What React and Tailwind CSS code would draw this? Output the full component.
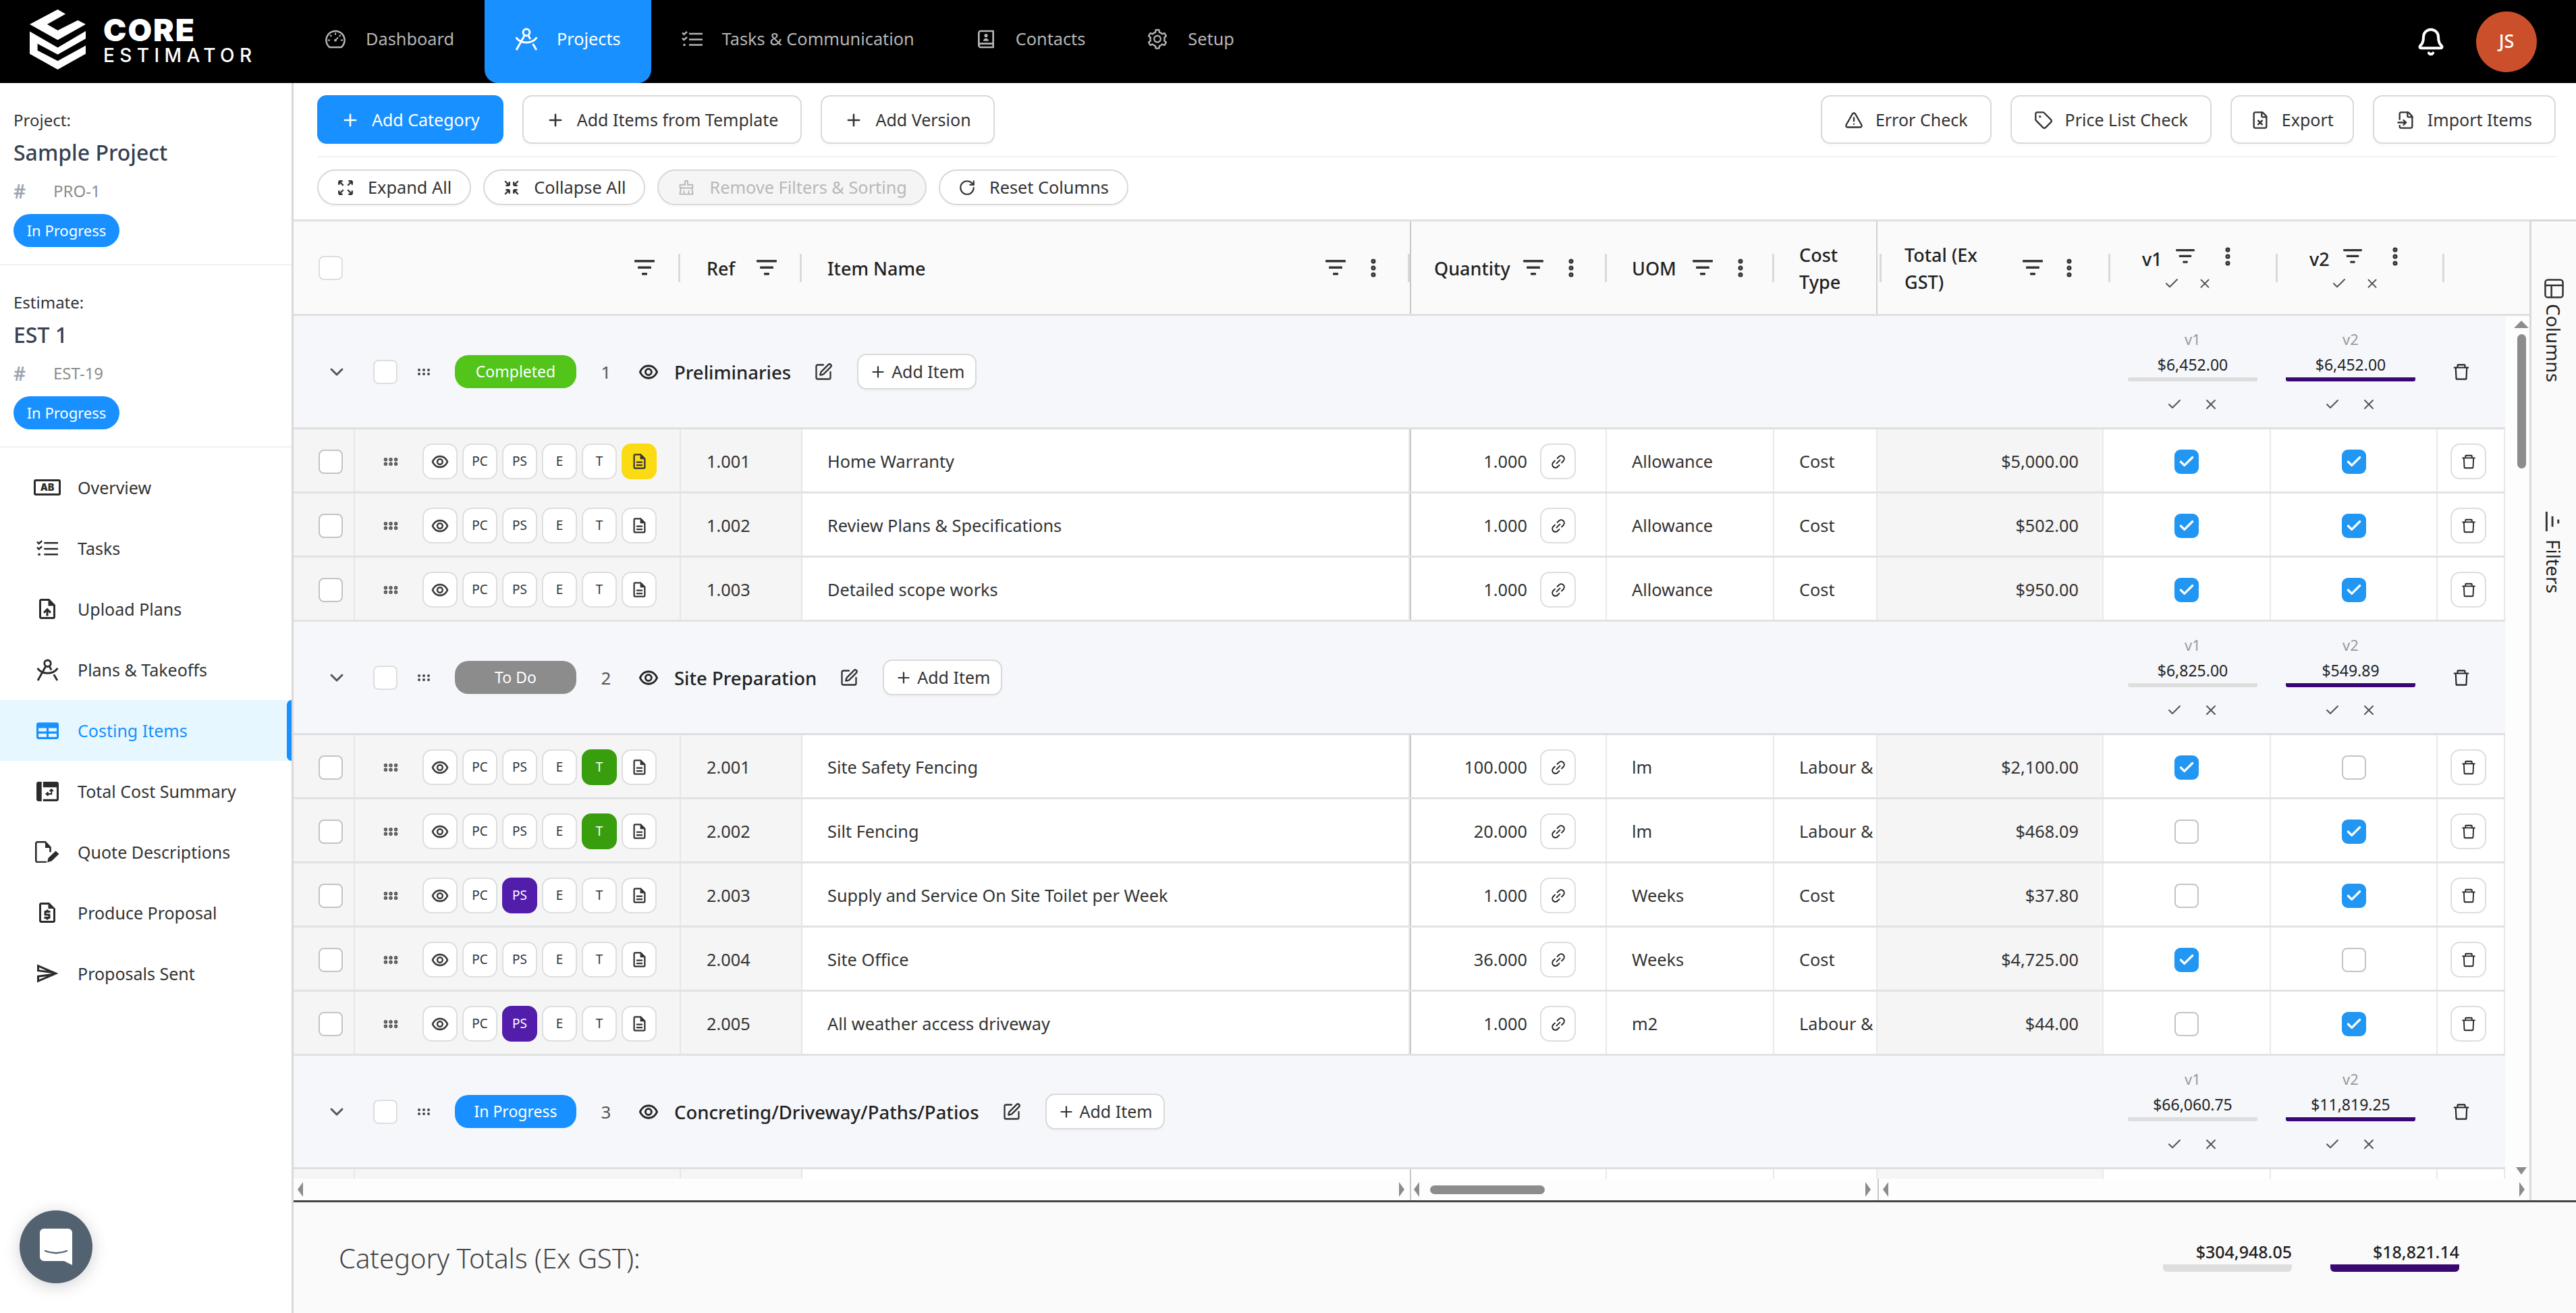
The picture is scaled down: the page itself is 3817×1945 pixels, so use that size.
import React from 'react';
import { Check, ChevronDown, EllipsisVertical, GripHorizontal, Plus, RotateCw, SquarePen, TriangleAlert, Tag, FileX, FileInput, X, Bell } from 'lucide-react';
import { AiOutlineClear, AiOutlineDashboard, AiOutlineDelete, AiOutlineEye, AiOutlineLink, AiOutlineSetting } from 'react-icons/ai';
import { MdOutlineDescription, MdOutlineRequestQuote, MdOutlineSend, MdOutlineUploadFile } from 'react-icons/md';
import { RiContactsBook2Line } from 'react-icons/ri';

const categories = [
  {
    no: 1, name: 'Preliminaries', status: 'Completed', statusClass: 'bg-[#52c41a]', v1: '$6,452.00', v2: '$6,452.00',
    items: [
      { ref: '1.001', name: 'Home Warranty', qty: '1.000', uom: 'Allowance', type: 'Cost', total: '$5,000.00', v1: true, v2: true, note: true },
      { ref: '1.002', name: 'Review Plans & Specifications', qty: '1.000', uom: 'Allowance', type: 'Cost', total: '$502.00', v1: true, v2: true },
      { ref: '1.003', name: 'Detailed scope works', qty: '1.000', uom: 'Allowance', type: 'Cost', total: '$950.00', v1: true, v2: true },
    ],
  },
  {
    no: 2, name: 'Site Preparation', status: 'To Do', statusClass: 'bg-[#8c8c8c]', v1: '$6,825.00', v2: '$549.89',
    items: [
      { ref: '2.001', name: 'Site Safety Fencing', qty: '100.000', uom: 'lm', type: 'Labour & Materials', total: '$2,100.00', v1: true, v2: false, active: 'T' },
      { ref: '2.002', name: 'Silt Fencing', qty: '20.000', uom: 'lm', type: 'Labour & Materials', total: '$468.09', v1: false, v2: true, active: 'T' },
      { ref: '2.003', name: 'Supply and Service On Site Toilet per Week', qty: '1.000', uom: 'Weeks', type: 'Cost', total: '$37.80', v1: false, v2: true, active: 'PS' },
      { ref: '2.004', name: 'Site Office', qty: '36.000', uom: 'Weeks', type: 'Cost', total: '$4,725.00', v1: true, v2: false },
      { ref: '2.005', name: 'All weather access driveway', qty: '1.000', uom: 'm2', type: 'Labour & Materials', total: '$44.00', v1: false, v2: true, active: 'PS' },
    ],
  },
  {
    no: 3, name: 'Concreting/Driveway/Paths/Patios', status: 'In Progress', statusClass: 'bg-[#1890ff]', v1: '$66,060.75', v2: '$11,819.25',
    items: [],
  },
];

const rowGrid = 'grid grid-cols-[91px_483px_180px_900px_292px_248px_153px_335px_248px_247px_100px]';

function TasksIcon({ className }) {
  return (
    <svg viewBox="0 0 32 24" className={className} fill="none" stroke="currentColor" strokeWidth="2.4">
      <path d="M1 2.5l2.5 2.5L8 1M1 10.5L3.5 13 8 9" />
      <circle cx="4" cy="20.5" r="1.8" fill="currentColor" stroke="none" />
      <path d="M11 4h20M11 12.5h20M11 20.5h20" />
    </svg>
  );
}

function CompassIcon({ className }) {
  return (
    <svg viewBox="0 0 32 32" className={className} fill="none" stroke="currentColor" strokeWidth="2.8">
      <circle cx="16" cy="6.5" r="4.6" />
      <path d="M13.5 10.5L2 31M18.5 10.5L21.5 16M25 22.5L30 31" />
      <path d="M1.5 13.5C8 23 24 23 30.5 13.5" />
    </svg>
  );
}

function OverviewIcon() {
  return (
    <div className="w-[40px] h-[24px] border-[3px] border-[#2b2b2b] rounded-[3px] flex items-center justify-center font-['Inter',sans-serif] text-[14px] leading-none font-black text-[#2b2b2b]">
      AB
    </div>
  );
}

function CostingIcon() {
  return (
    <svg viewBox="0 0 32 24" className="w-[33px] h-[25px]">
      <rect width="32" height="24" rx="3" fill="#1890ff" />
      <path d="M3 8h11.5v5H3zM17.5 8H29v5H17.5zM3 16h11.5v5H3zM17.5 16H29v5H17.5z" fill="#e6f7ff" />
    </svg>
  );
}

function SummaryIcon() {
  return (
    <svg viewBox="0 0 32 28" className="w-[33px] h-[29px]">
      <path d="M3 0h4.5v28H3a3 3 0 0 1-3-3V3a3 3 0 0 1 3-3zM9.5 0H29a3 3 0 0 1 3 3v22a3 3 0 0 1-3 3H9.5v-3H29V8H9.5z" fill="#2b2b2b" />
      <path d="M21.5 11.5v6h-7M17 15l-3 2.5 3 2.5M19 13.5l2.5-2.5 2.5 2.5" fill="none" stroke="#2b2b2b" strokeWidth="2" />
    </svg>
  );
}

function QuoteIcon() {
  return (
    <svg viewBox="0 0 36 32" className="w-[36px] h-[32px]" fill="none" stroke="#2b2b2b" strokeWidth="2.6">
      <path d="M17 31H3.5A2.2 2.2 0 0 1 1.3 29V3.5A2.2 2.2 0 0 1 3.5 1.3H15l7.5 8v7" />
      <path d="M15 1v9h8" fill="#2b2b2b" stroke="none" />
      <path d="M18 31.5l1.5-6.5 11-10.5 5 4.5-11 10.5z" fill="#2b2b2b" stroke="none" />
    </svg>
  );
}

function ExpandIcon({ className }) {
  return (
    <svg viewBox="0 0 24 24" className={className} fill="none" stroke="currentColor" strokeWidth="2.2">
      <path d="M3 3l6 6M3 3v5M3 3h5M21 3l-6 6M21 3v5M21 3h-5M3 21l6-6M3 21v-5M3 21h5M21 21l-6-6M21 21v-5M21 21h-5" />
    </svg>
  );
}

function CollapseIcon({ className }) {
  return (
    <svg viewBox="0 0 24 24" className={className} fill="none" stroke="currentColor" strokeWidth="2.2">
      <path d="M3 3l6 6M9 9V4M9 9H4M21 3l-6 6M15 9V4M15 9h5M3 21l6-6M9 15v5M9 15H4M21 21l-6-6M15 15v5M15 15h5" />
    </svg>
  );
}

function FilterIcon({ className = 'w-[30px] h-[26px]' }) {
  return (
    <svg viewBox="0 0 30 26" className={`${className} text-[#333] shrink-0`} fill="currentColor">
      <rect x="0" y="1" width="30" height="3.6" rx="1" />
      <rect x="5" y="10.5" width="20" height="3.6" rx="1" />
      <rect x="11" y="20" width="8" height="3.6" rx="1" />
    </svg>
  );
}

function ToolButton({ icon, children, primary, className = 'px-[33px]' }) {
  return (
    <button
      className={`h-[72px] rounded-[14px] flex items-center gap-[18px] text-[25px] pt-[2px] border-2 shadow-[0_4px_0_rgba(0,0,0,0.02)] ${
        primary ? 'bg-[#1890ff] border-[#1890ff] text-white' : 'bg-white border-[#d9d9d9] text-[#333]'
      } ${className}`}
    >
      {icon}
      {children}
    </button>
  );
}

function PillButton({ icon, children, disabled }) {
  return (
    <button
      className={`h-[53px] px-[27px] rounded-full flex items-center gap-[20px] text-[25.3px] border-2 shadow-[0_3px_0_rgba(0,0,0,0.02)] ${
        disabled ? 'bg-[#f5f5f5] border-[#d9d9d9] text-[#b8b8b8]' : 'bg-white border-[#d9d9d9] text-[#333]'
      }`}
    >
      {icon}
      {children}
    </button>
  );
}

function CheckBox({ checked, className = 'border-[#c4c4c4]' }) {
  if (checked) {
    return (
      <span className="w-[36px] h-[36px] rounded-[9px] bg-[#2196f3] flex items-center justify-center shrink-0">
        <Check className="w-[26px] h-[26px] text-white" strokeWidth={3} />
      </span>
    );
  }
  return <span className={`block w-[36px] h-[36px] rounded-[8px] bg-white border-2 shrink-0 ${className}`} />;
}

function SquareButton({ active, children }) {
  const colors = {
    T: 'bg-[#389e0d] border-[#389e0d] text-white',
    PS: 'bg-[#531dab] border-[#531dab] text-white',
    note: 'bg-[#fadb14] border-[#fadb14] text-[#333]',
  };
  return (
    <span
      className={`w-[52px] h-[53px] rounded-[14px] border-2 flex items-center justify-center text-[19px] ${
        active ? colors[active] : 'bg-white border-[#dedede] text-[#333]'
      }`}
    >
      {children}
    </span>
  );
}

function HeaderBar() {
  return <span className="block w-[3px] h-[42px] bg-[#d9d9d9] shrink-0" />;
}

function HeaderDots({ className = '' }) {
  return <EllipsisVertical className={`w-[34px] h-[36px] text-[#333] shrink-0 ${className}`} strokeWidth={3} />;
}

function TableHeader() {
  return (
    <div className="h-[143px] shrink-0 bg-[#fafafa] border-t-[3px] border-b-[3px] border-[#dfdfdf] grid grid-cols-[574px_180px_900px_292px_248px_153px_345px_248px_247px_126px] text-[27px] font-medium text-[#222]">
      <div className="flex items-center pl-[37px] pr-[1px]">
        <CheckBox className="border-[#dedede]" />
        <span className="ml-auto mr-[35px]"><FilterIcon /></span>
        <HeaderBar />
      </div>
      <div className="flex items-center pl-[38px] pr-[1px]">
        <span className="pt-[3px]">Ref</span>
        <span className="ml-auto mr-[34px]"><FilterIcon /></span>
        <HeaderBar />
      </div>
      <div className="flex items-center pl-[37px] pr-0">
        <span className="pt-[3px]">Item Name</span>
        <span className="ml-auto mr-[24px]"><FilterIcon /></span>
        <HeaderDots className="mr-[34px]" />
        <HeaderBar />
      </div>
      <div className="flex items-center pl-[34px] border-l-2 border-[#c8c8c8]">
        <span className="pt-[3px]">Quantity</span>
        <span className="ml-[19px] mr-[24px]"><FilterIcon /></span>
        <HeaderDots className="mr-auto" />
        <HeaderBar />
      </div>
      <div className="flex items-center pl-[37px]">
        <span className="pt-[3px]">UOM</span>
        <span className="ml-[24px] mr-[24px]"><FilterIcon /></span>
        <HeaderDots className="mr-auto" />
        <HeaderBar />
      </div>
      <div className="flex items-center pl-[37px] border-r-2 border-[#d0d0d0]">
        <span className="leading-[40px] w-[80px] pt-[3px]">Cost Type</span>
      </div>
      <div className="flex items-center">
        <span className="ml-[3px]"><HeaderBar /></span>
        <span className="ml-[34px] leading-[40px] w-[130px] pt-[3px]">Total (Ex GST)</span>
        <span className="ml-auto mr-[22px]"><FilterIcon /></span>
        <HeaderDots className="mr-[41px]" />
        <HeaderBar />
      </div>
      <VersionHeader label="v1" />
      <VersionHeader label="v2" />
      <div />
    </div>
  );
}

function VersionHeader({ label }) {
  return (
    <div className="flex items-center">
      <div className="ml-[47px] w-[160px] flex flex-col">
        <div className="flex items-center">
          <span className="w-[50px]">{label}</span>
          <FilterIcon className="w-[28px] h-[24px] mb-[10px]" />
          <HeaderDots className="ml-[32px] mb-[10px]" />
        </div>
        <div className="flex items-center gap-[26px] pl-[32px] text-[#555]">
          <Check className="w-[24px] h-[24px]" strokeWidth={2} />
          <X className="w-[22px] h-[22px]" strokeWidth={2} />
        </div>
      </div>
      <span className="ml-auto"><HeaderBar /></span>
    </div>
  );
}

function VersionTotal({ label, amount, barClass }) {
  return (
    <div className="w-[192px] flex flex-col items-center mb-[4px]">
      <span className="text-[22px] leading-[30px] text-[#999]">{label}</span>
      <span className="text-[23px] leading-[30px] mt-[8px] text-[#222]">{amount}</span>
      <span className={`w-full h-[6px] mt-[4px] rounded-b-[3px] ${barClass}`} />
      <span className="mt-[22px] flex items-center gap-[30px] text-[#555]">
        <Check className="w-[24px] h-[24px]" strokeWidth={2} />
        <X className="w-[24px] h-[24px]" strokeWidth={2} />
      </span>
    </div>
  );
}

function CategoryRow({ category }) {
  return (
    <div className="h-[168px] shrink-0 bg-[#f5f7fb] border-b-[3px] border-[#dfdfdf] flex items-center pr-[50px]">
      <ChevronDown className="ml-[48px] w-[32px] h-[32px] text-[#555] shrink-0" strokeWidth={2.2} />
      <span className="ml-[38px]"><CheckBox className="border-[#dedede]" /></span>
      <GripHorizontal className="ml-[27px] w-[24px] h-[24px] text-[#444] shrink-0" strokeWidth={2} />
      <span className={`ml-[34px] w-[180px] h-[49px] rounded-[20px] flex items-center justify-center text-[23px] text-white shrink-0 ${category.statusClass}`}>
        {category.status}
      </span>
      <span className="w-[88px] text-center text-[26px] text-[#555] pt-[2px]">{category.no}</span>
      <AiOutlineEye className="ml-[3px] w-[32px] h-[32px] text-[#222] shrink-0" stroke="currentColor" strokeWidth={24} />
      <span className="ml-[22px] pt-[2px] text-[27.5px] font-medium text-[#222]">{category.name}</span>
      <SquarePen className="ml-[34px] w-[28px] h-[28px] text-[#333] shrink-0" strokeWidth={2} />
      <button className="ml-[36px] h-[53px] px-[16px] rounded-[14px] bg-white border-2 border-[#d9d9d9] shadow-[0_3px_0_rgba(0,0,0,0.02)] flex items-center gap-[7px] text-[25px] text-[#333]">
        <Plus className="w-[26px] h-[26px]" strokeWidth={2} />
        Add Item
      </button>
      <div className="ml-auto flex items-center">
        <VersionTotal label="v1" amount={category.v1} barClass="bg-[#dedede]" />
        <span className="w-[42px]" />
        <VersionTotal label="v2" amount={category.v2} barClass="bg-[#3a0873]" />
        <AiOutlineDelete className="ml-[53px] w-[30px] h-[30px] text-[#222]" />
      </div>
    </div>
  );
}

function ItemRow({ item }) {
  const fixedCell = 'bg-[#f5f5f5] border-r-2 border-[#e6e6e6] flex items-center pt-[3px]';
  const cell = 'border-r-2 border-[#e9e9e9] flex items-center whitespace-nowrap overflow-hidden pt-[3px]';
  return (
    <div className={`${rowGrid} h-[95px] shrink-0 border-b-[3px] border-[#e2e2e2] bg-white text-[25.3px] text-[#333]`}>
      <div className={`${fixedCell} pl-[37px]`}><CheckBox /></div>
      <div className={`${fixedCell} pl-[40px]`}>
        <GripHorizontal className="w-[26px] h-[26px] text-[#555] shrink-0" strokeWidth={3} />
        <div className="ml-[34px] flex gap-[7px]">
          <SquareButton><AiOutlineEye className="w-[28px] h-[28px]" stroke="currentColor" strokeWidth={24} /></SquareButton>
          <SquareButton>PC</SquareButton>
          <SquareButton active={item.active === 'PS' ? 'PS' : undefined}>PS</SquareButton>
          <SquareButton>E</SquareButton>
          <SquareButton active={item.active === 'T' ? 'T' : undefined}>T</SquareButton>
          <SquareButton active={item.note ? 'note' : undefined}><MdOutlineDescription className="w-[27px] h-[27px]" /></SquareButton>
        </div>
      </div>
      <div className={`${fixedCell} pl-[38px]`}>{item.ref}</div>
      <div className={`${cell} pl-[37px] border-r-0`}>{item.name}</div>
      <div className={`${cell} border-l-2 border-l-[#c8c8c8] justify-end pr-[44px]`}>
        {item.qty}
        <span className="ml-[19px] w-[53px] h-[53px] rounded-[14px] border-2 border-[#dedede] bg-white flex items-center justify-center">
          <AiOutlineLink className="w-[26px] h-[26px] text-[#222]" />
        </span>
      </div>
      <div className={`${cell} pl-[37px]`}>{item.uom}</div>
      <div className={`${cell} pl-[37px]`}>{item.type}</div>
      <div className={`${cell} bg-[#f5f5f5] justify-end pr-[35px]`}>{item.total}</div>
      <div className={`${cell} justify-center`}><CheckBox checked={item.v1} /></div>
      <div className={`${cell} justify-center`}><CheckBox checked={item.v2} /></div>
      <div className={`${cell} pl-[19px]`}>
        <span className="w-[53px] h-[53px] rounded-[14px] border-2 border-[#dedede] bg-white flex items-center justify-center">
          <AiOutlineDelete className="w-[26px] h-[26px] text-[#222]" />
        </span>
      </div>
    </div>
  );
}

function StubRow() {
  return (
    <div className={`${rowGrid} h-[95px] shrink-0 bg-white`}>
      <div className="bg-[#f5f5f5] border-r-2 border-[#e6e6e6]" />
      <div className="bg-[#f5f5f5] border-r-2 border-[#e6e6e6]" />
      <div className="bg-[#f5f5f5] border-r-2 border-[#e6e6e6]" />
      <div />
      <div className="border-l-2 border-r-2 border-l-[#c8c8c8] border-r-[#e9e9e9]" />
      <div className="border-r-2 border-[#e9e9e9]" />
      <div className="border-r-2 border-[#e9e9e9]" />
      <div className="bg-[#f5f5f5] border-r-2 border-[#e9e9e9]" />
      <div className="border-r-2 border-[#e9e9e9]" />
      <div className="border-r-2 border-[#e9e9e9]" />
      <div className="border-r-2 border-[#e9e9e9]" />
    </div>
  );
}

function Arrow({ dir }) {
  const shapes = {
    up: 'border-x-[11px] border-x-transparent border-b-[11px] border-b-[#8c8c8c]',
    down: 'border-x-[8px] border-x-transparent border-t-[11px] border-t-[#8c8c8c]',
    left: 'border-y-[11px] border-y-transparent border-r-[8px] border-r-[#8c8c8c]',
    right: 'border-y-[11px] border-y-transparent border-l-[8px] border-l-[#8c8c8c]',
  };
  return <span className={`block w-0 h-0 shrink-0 ${shapes[dir]}`} />;
}

function CostingTable() {
  return (
    <div className="w-[3313px] h-full flex flex-col">
      <TableHeader />
      <div className="flex-1 min-h-0 flex">
        <div className="w-[3277px] flex flex-col overflow-hidden">
          {categories.map((category) => (
            <React.Fragment key={category.no}>
              <CategoryRow category={category} />
              {category.items.map((item) => (
                <ItemRow key={item.ref} item={item} />
              ))}
            </React.Fragment>
          ))}
          <StubRow />
        </div>
        <div className="w-[36px] bg-[#fdfdfd] flex flex-col items-center pl-[12px] pt-[7px] pb-[6px]">
          <Arrow dir="up" />
          <span className="w-[13px] h-[199px] mt-[9px] rounded-full bg-[#8c8c8c]" />
          <span className="mt-auto"><Arrow dir="down" /></span>
        </div>
      </div>
      <div className="h-[32px] shrink-0 flex bg-[#fdfdfd]">
        <div className="w-[1654px] flex items-center justify-between pl-[6px] pr-[8px]">
          <Arrow dir="left" />
          <Arrow dir="right" />
        </div>
        <div className="w-[693px] border-l-2 border-[#c8c8c8] flex items-center pl-[4px] pr-[10px]">
          <Arrow dir="left" />
          <span className="ml-[16px] w-[170px] h-[13px] rounded-full bg-[#8c8c8c]" />
          <span className="ml-auto"><Arrow dir="right" /></span>
        </div>
        <div className="flex-1 border-l-2 border-[#c8c8c8] flex items-center justify-between pl-[6px] pr-[7px]">
          <Arrow dir="left" />
          <Arrow dir="right" />
        </div>
      </div>
    </div>
  );
}

function SidePanel() {
  return (
    <div className="flex-1 border-l-[3px] border-t-[3px] border-[#d9d9d9] bg-[#fafafa] flex flex-col items-center pt-[85px] text-[28px] text-[#222]">
      <svg viewBox="0 0 30 30" className="w-[29px] h-[29px]" fill="none" stroke="#333" strokeWidth="2.6">
        <rect x="1.5" y="1.5" width="27" height="27" rx="4" />
        <path d="M1.5 10h27M11 10v18.5" />
      </svg>
      <span className="[writing-mode:vertical-rl] mt-[8px] leading-none">Columns</span>
      <svg viewBox="0 0 30 30" className="w-[29px] h-[29px] mt-[192px] -rotate-90" fill="#333">
        <rect x="0" y="2" width="30" height="3" />
        <rect x="7" y="11" width="16" height="3" />
        <rect x="12" y="20" width="6" height="3" />
      </svg>
      <span className="[writing-mode:vertical-rl] mt-[12px] leading-none">Filters</span>
    </div>
  );
}

function NavItem({ icon, label, active }) {
  return (
    <div
      className={`h-full px-[45px] pb-[8px] rounded-b-[20px] flex items-center gap-[28px] text-[25.3px] ${
        active ? 'bg-[#1890ff] text-white' : 'text-[#b5b5b5]'
      }`}
    >
      {icon}
      {label}
    </div>
  );
}

function SideLink({ icon, label, active }) {
  return (
    <div
      className={`h-[90px] pl-[48px] flex items-center text-[25px] ${
        active ? 'bg-[#e6f7ff] text-[#1890ff] relative' : 'text-[#333]'
      }`}
    >
      <span className="w-[44px] flex justify-center">{icon}</span>
      <span className="ml-[23px] pt-[2px]">{label}</span>
      {active && <span className="absolute right-0 top-0 bottom-0 w-[7px] rounded-l-[7px] bg-[#1890ff]" />}
    </div>
  );
}

function SideSummary({ heading, title, code }) {
  return (
    <div className="h-[270px] pt-[38px] px-[20px] border-b-2 border-[#f0f0f0]">
      <div className="text-[24px] leading-[34px] text-[#333]">{heading}</div>
      <div className="text-[32px] leading-[44px] mt-[9px] font-medium text-[#374151]">{title}</div>
      <div className="mt-[18px] flex items-center text-[24px] leading-[34px] text-[#8c8c8c]">
        <span className="w-[59px] text-[28px] font-semibold text-[#9ca3af]">#</span>{code}
      </div>
      <span className="mt-[17px] w-[157px] h-[49px] rounded-full bg-[#1890ff] text-white text-[22px] flex items-center justify-center">In Progress</span>
    </div>
  );
}

function Sidebar() {
  return (
    <aside className="w-[435px] shrink-0 border-r-[3px] border-[#d9d9d9] bg-white relative">
      <SideSummary heading="Project:" title="Sample Project" code="PRO-1" />
      <SideSummary heading="Estimate:" title="EST 1" code="EST-19" />
      <nav className="pt-[14px]">
        <SideLink label="Overview" icon={<OverviewIcon />} />
        <SideLink label="Tasks" icon={<TasksIcon className="w-[33px] h-[25px] text-[#2b2b2b]" />} />
        <SideLink label="Upload Plans" icon={<MdOutlineUploadFile className="w-[36px] h-[36px] text-[#2b2b2b]" />} />
        <SideLink label="Plans & Takeoffs" icon={<CompassIcon className="w-[33px] h-[33px] text-[#2b2b2b]" />} />
        <SideLink label="Costing Items" active icon={<CostingIcon />} />
        <SideLink label="Total Cost Summary" icon={<SummaryIcon />} />
        <SideLink label="Quote Descriptions" icon={<QuoteIcon />} />
        <SideLink label="Produce Proposal" icon={<MdOutlineRequestQuote className="w-[36px] h-[36px] text-[#2b2b2b]" />} />
        <SideLink label="Proposals Sent" icon={<MdOutlineSend className="w-[36px] h-[36px] text-[#2b2b2b]" />} />
      </nav>
      {/* Support chat bubble */}
      <div className="absolute left-[29px] top-[1670px] w-[108px] h-[108px] rounded-full bg-[#536270] shadow-[0_4px_24px_rgba(0,0,0,0.18)] flex items-center justify-center">
        <svg viewBox="0 0 48 54" className="w-[48px] h-[54px]">
          <path d="M6 0h36a6 6 0 0 1 6 6v48l-12-6H6a6 6 0 0 1-6-6V6a6 6 0 0 1 6-6z" fill="#fff" />
          <path d="M8 33c10 4 22 4 32 0" fill="none" stroke="#536270" strokeWidth="2.4" strokeLinecap="round" />
        </svg>
      </div>
    </aside>
  );
}

function Logo() {
  return (
    <div className="w-[435px] h-full pl-[44px] flex items-center shrink-0">
      <svg viewBox="72 42 250 268" className="w-[83px] h-[89px] mb-[6px]" fill="#fff">
        <polygon points="197,42 232,62 150,108 197,135 287,90 322,108 197,178 72,108" />
        <polygon points="72,140 197,212 322,138 322,172 197,243 107,195 107,225 197,272 322,203 322,240 197,310 72,240" />
      </svg>
      <div className="ml-[26px] mb-[4px] flex flex-col text-white font-['Inter',sans-serif]">
        <span className="text-[46px] leading-[44px] font-black tracking-[2px]">CORE</span>
        <span className="text-[28px] leading-[32px] font-medium tracking-[7.4px]">ESTIMATOR</span>
      </div>
    </div>
  );
}

export default function App() {
  return (
    <div className="h-screen overflow-hidden flex flex-col bg-white font-['Noto_Sans',sans-serif]">
      <header className="h-[123px] shrink-0 bg-black flex items-center">
        <Logo />
        <nav className="h-full flex">
          <NavItem label="Dashboard" icon={<AiOutlineDashboard className="w-[34px] h-[34px]" />} />
          <NavItem label="Projects" active icon={<CompassIcon className="w-[34px] h-[38px]" />} />
          <NavItem label="Tasks & Communication" icon={<TasksIcon className="w-[32px] h-[28px]" />} />
          <NavItem label="Contacts" icon={<RiContactsBook2Line className="w-[32px] h-[34px]" />} />
          <NavItem label="Setup" icon={<AiOutlineSetting className="w-[34px] h-[34px]" />} />
        </nav>
        <Bell className="ml-auto w-[44px] h-[48px] text-white" strokeWidth={2.2} />
        <span className="ml-[45px] mr-[58px] w-[90px] h-[90px] rounded-full bg-[#cb4f2a] text-white text-[27px] font-medium flex items-center justify-center">JS</span>
      </header>
      <div className="flex-1 min-h-0 flex">
        <Sidebar />
        <main className="flex-1 min-w-0 flex flex-col">
          <div className="h-[202px] shrink-0 flex flex-col pt-[18px]">
            <div className="ml-[35px] mr-[30px] flex items-center gap-[28px]">
              <ToolButton primary icon={<Plus className="w-[28px] h-[28px]" strokeWidth={2.2} />}>Add Category</ToolButton>
              <ToolButton icon={<Plus className="w-[28px] h-[28px]" strokeWidth={2.2} />}>Add Items from Template</ToolButton>
              <ToolButton icon={<Plus className="w-[28px] h-[28px]" strokeWidth={2.2} />}>Add Version</ToolButton>
              <div className="ml-auto flex gap-[28px]">
                <ToolButton icon={<TriangleAlert className="w-[28px] h-[28px]" strokeWidth={2} />}>Error Check</ToolButton>
                <ToolButton icon={<Tag className="w-[28px] h-[28px]" strokeWidth={2} />}>Price List Check</ToolButton>
                <ToolButton className="px-[28px]" icon={<FileX className="w-[28px] h-[28px]" strokeWidth={2} />}>Export</ToolButton>
                <ToolButton icon={<FileInput className="w-[28px] h-[28px]" strokeWidth={2} />}>Import Items</ToolButton>
              </div>
            </div>
            <div className="ml-[35px] mr-[30px] mt-[18px] border-t-2 border-[#f0f0f0]" />
            <div className="ml-[35px] mt-[18px] flex gap-[18px]">
              <PillButton icon={<ExpandIcon className="w-[26px] h-[26px]" />}>Expand All</PillButton>
              <PillButton icon={<CollapseIcon className="w-[26px] h-[26px]" />}>Collapse All</PillButton>
              <PillButton disabled icon={<AiOutlineClear className="w-[28px] h-[28px]" />}>Remove Filters & Sorting</PillButton>
              <PillButton icon={<RotateCw className="w-[26px] h-[26px]" strokeWidth={2} />}>Reset Columns</PillButton>
            </div>
          </div>
          <div className="flex-1 min-h-0 flex">
            <CostingTable />
            <SidePanel />
          </div>
          <footer className="h-[167px] shrink-0 bg-[#fafafa] border-t-[3px] border-[#444] flex items-center pl-[67px]">
            <span className="text-[40px] font-light text-[#444] pt-[2px]">Category Totals (Ex GST):</span>
            <div className="ml-auto mr-[173px] flex gap-[57px] mb-[6px]">
              <div className="w-[191px] flex flex-col items-end">
                <span className="text-[25px] leading-[34px] font-medium text-[#222]">$304,948.05</span>
                <span className="w-full h-[11px] mt-[2px] rounded-b-[6px] bg-[#dedede]" />
              </div>
              <div className="w-[191px] flex flex-col items-end">
                <span className="text-[25px] leading-[34px] font-medium text-[#222]">$18,821.14</span>
                <span className="w-full h-[11px] mt-[2px] rounded-b-[6px] bg-[#3a0873]" />
              </div>
            </div>
          </footer>
        </main>
      </div>
    </div>
  );
}
